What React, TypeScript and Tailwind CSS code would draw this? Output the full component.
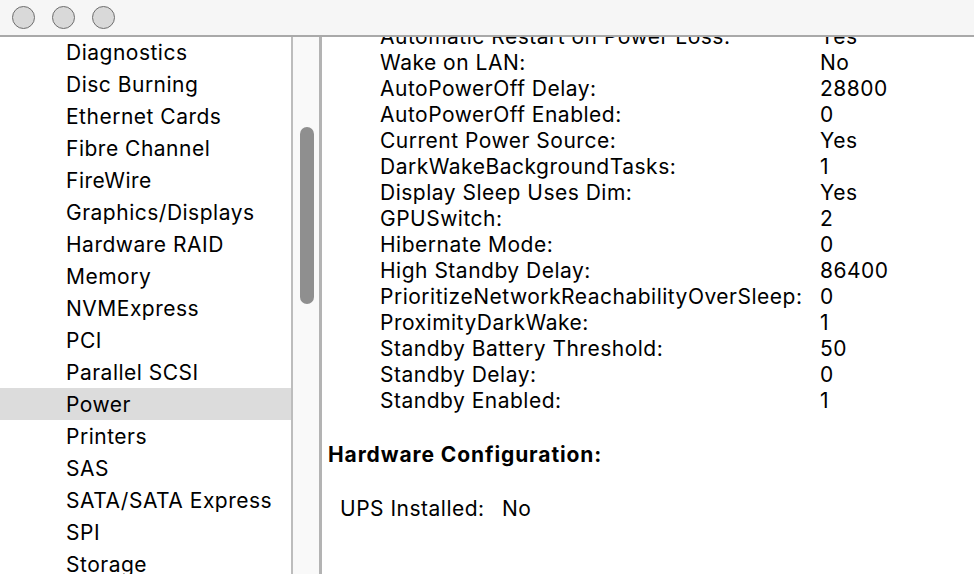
import React from "react";

const sidebar = [
  "Diagnostics",
  "Disc Burning",
  "Ethernet Cards",
  "Fibre Channel",
  "FireWire",
  "Graphics/Displays",
  "Hardware RAID",
  "Memory",
  "NVMExpress",
  "PCI",
  "Parallel SCSI",
  "Power",
  "Printers",
  "SAS",
  "SATA/SATA Express",
  "SPI",
  "Storage",
];

const rows: [string, string][] = [
  ["Automatic Restart on Power Loss:", "Yes"],
  ["Wake on LAN:", "No"],
  ["AutoPowerOff Delay:", "28800"],
  ["AutoPowerOff Enabled:", "0"],
  ["Current Power Source:", "Yes"],
  ["DarkWakeBackgroundTasks:", "1"],
  ["Display Sleep Uses Dim:", "Yes"],
  ["GPUSwitch:", "2"],
  ["Hibernate Mode:", "0"],
  ["High Standby Delay:", "86400"],
  ["PrioritizeNetworkReachabilityOverSleep:", "0"],
  ["ProximityDarkWake:", "1"],
  ["Standby Battery Threshold:", "50"],
  ["Standby Delay:", "0"],
  ["Standby Enabled:", "1"],
];

export default function App() {
  return (
    <div className="w-[974px] h-[574px] overflow-hidden bg-white flex flex-col text-black font-['Inter','Liberation_Sans',sans-serif]">
      <div className="h-[37px] shrink-0 bg-[#f6f6f6] border-b-2 border-[#a9a9a9] flex items-center gap-[17px] pl-[12px] pb-[1px]">
        <div className="w-[23px] h-[23px] rounded-full bg-[#d9d9d9] border-[1.5px] border-[#6e6e6e]" />
        <div className="w-[23px] h-[23px] rounded-full bg-[#d9d9d9] border-[1.5px] border-[#6e6e6e]" />
        <div className="w-[23px] h-[23px] rounded-full bg-[#d9d9d9] border-[1.5px] border-[#6e6e6e]" />
      </div>
      <div className="flex flex-1 min-h-0">
        <div className="w-[291px] shrink-0 overflow-hidden -mt-[1px]">
          {sidebar.map((s) => (
            <div
              key={s}
              className={`h-[32px] flex items-center pt-[2px] pl-[66px] text-[21px] tracking-[0.5px] ${s === "Power" ? "bg-[#dcdcdc]" : ""}`}
            >
              {s}
            </div>
          ))}
        </div>
        <div className="w-[2px] shrink-0 bg-[#bdbdbd]" />
        <div className="w-[26px] shrink-0 bg-[#f9f9f9] pt-[90px] pl-[7px]">
          <div className="w-[14px] h-[177px] rounded-full bg-[#8f8f8f]" />
        </div>
        <div className="w-[3px] shrink-0 bg-[#b3b3b3]" />
        <div className="flex-1 overflow-hidden">
          <div className="-mt-[13px]">
            <div className="pl-[58px]">
              {rows.map(([k, v]) => (
                <div key={k} className="h-[26px] flex items-center text-[21px] tracking-[0.5px]">
                  <div className="w-[440px] shrink-0">{k}</div>
                  <div>{v}</div>
                </div>
              ))}
            </div>
            <div className="mt-[28px] pl-[6px] h-[26px] flex items-center text-[21px] tracking-[0.9px] font-bold">
              Hardware Configuration:
            </div>
            <div className="mt-[28px] pl-[18px] h-[26px] flex items-center text-[21px] tracking-[0.5px]">
              <span className="w-[162px]">UPS Installed:</span>
              <span>No</span>
            </div>
          </div>
        </div>
      </div>
    </div>
  );
}
